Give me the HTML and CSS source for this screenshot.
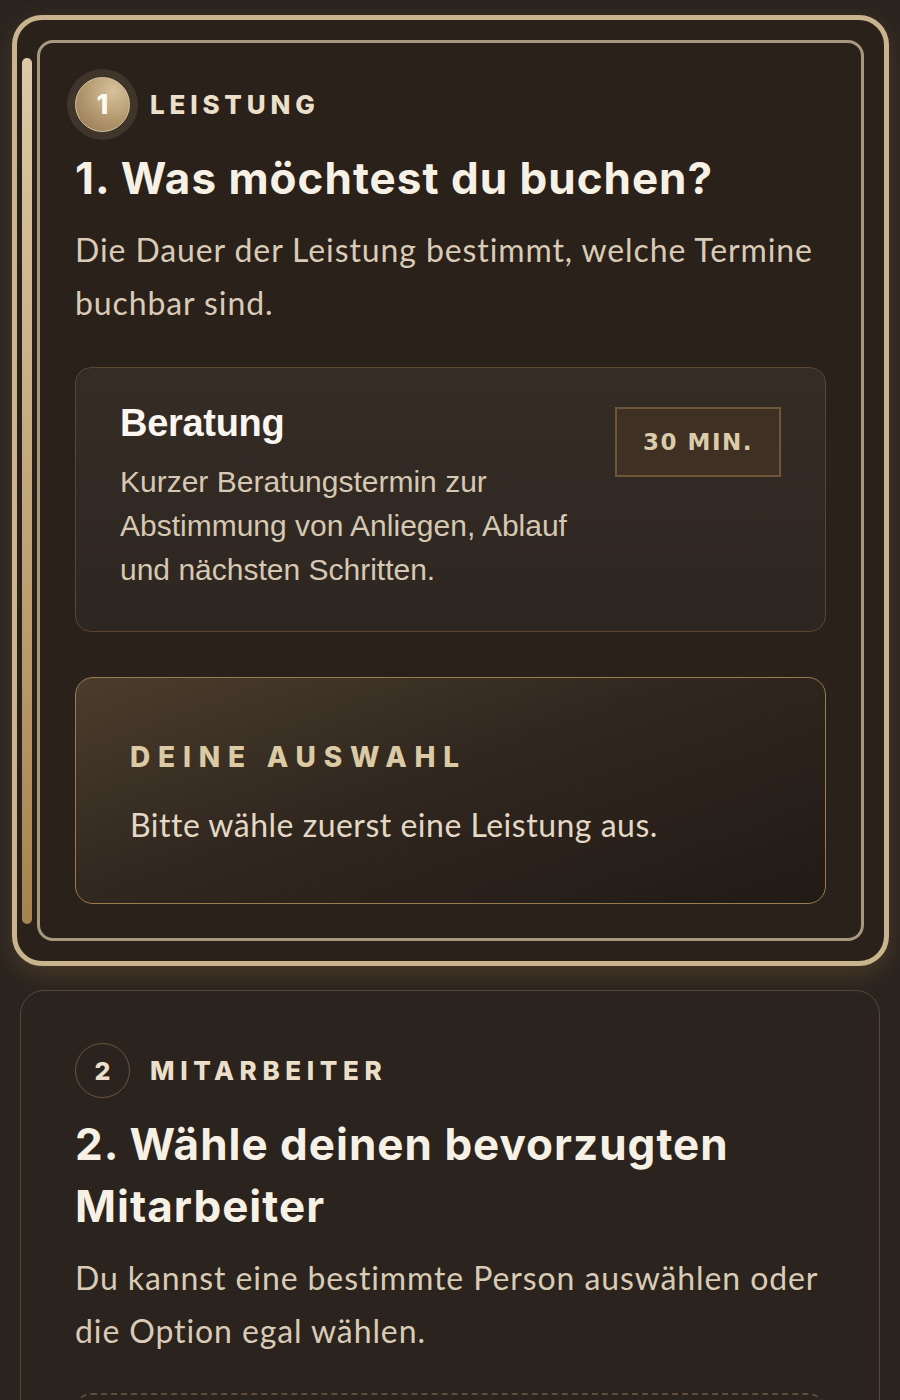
FILE: index.html
```html
<!DOCTYPE html>
<html lang="de">
<head>
    <title>Termin buchen</title>
    <meta charset="UTF-8">
    <link rel="stylesheet" href="styles.css">
</head>
<body>
    <main class="booking">
        <section class="step-frame">
            <span class="step-accent"></span>
            <div class="step step-active">
                <div class="step-head">
                    <span class="step-num step-num-active">1</span>
                    <span class="step-label">Leistung</span>
                </div>
                <h2 class="step-title">1. Was möchtest du buchen?</h2>
                <p class="step-text">Die Dauer der Leistung bestimmt, welche Termine buchbar sind.</p>

                <div class="service">
                    <div class="service-info">
                        <h3 class="service-name">Beratung</h3>
                        <p class="service-desc">Kurzer Beratungstermin zur Abstimmung von Anliegen, Ablauf und nächsten Schritten.</p>
                    </div>
                    <span class="service-time">30 Min.</span>
                </div>

                <div class="summary">
                    <div class="summary-label">Deine Auswahl</div>
                    <p class="summary-text">Bitte wähle zuerst eine Leistung aus.</p>
                </div>
            </div>
        </section>

        <section class="step step-next">
            <div class="step-head">
                <span class="step-num">2</span>
                <span class="step-label">Mitarbeiter</span>
            </div>
            <h2 class="step-title">2. Wähle deinen bevorzugten Mitarbeiter</h2>
            <p class="step-text">Du kannst eine bestimmte Person auswählen oder die Option egal wählen.</p>
            <div class="staff-list"></div>
        </section>
    </main>
</body>
</html>
```

FILE: styles.css
```css
body {
    margin: 0;
    background-color: #2a241f;
    font-family: 'Lato', sans-serif;
    color: #d9cbb5;
}

.booking {
    padding: 15px 11px 0 12px;
}

/* aktiver Schritt mit Rahmen */
.step-frame {
    position: relative;
    border: 5px solid #c9b48e;
    border-radius: 30px;
    padding: 20px;
    background: #2a211b;
    box-shadow: 0 8px 24px rgba(110, 85, 50, 0.45);
}

.step-accent {
    position: absolute;
    left: 5px;
    top: 38px;
    bottom: 37px;
    width: 10px;
    border-radius: 5px;
    background: linear-gradient(180deg, #dcc9a6, #b8996a 70%, #a5834e);
}

.step {
    background: #2b231e;
    border: 1.5px solid #56473a;
    border-radius: 24px;
    padding: 52px 54px 0 54px;
}

.step-active {
    background: #2a211b;
    border: 3px solid #a8987e;
    border-radius: 16px;
    padding: 34px 35px 34px 35px;
}

.step-next {
    margin: 24px 9px 0 8px;
    height: 420px;
}

.step-head {
    display: flex;
    align-items: center;
    gap: 20px;
}

.step-num {
    width: 53px;
    height: 53px;
    border-radius: 50%;
    border: 1.5px solid #6a563f;
    display: flex;
    align-items: center;
    justify-content: center;
    font-family: 'Inter', sans-serif;
    font-weight: 800;
    font-size: 25px;
    color: #eadfcd;
}

.step-num-active {
    border: 1.5px solid #d8c6a2;
    background: radial-gradient(circle at 70% 25%, #d6c29c, #b49a70 50%, #937550);
    box-shadow: 0 0 0 8px #3f352a;
    font-size: 27px;
    color: #fffaf0;
}

.step-label {
    font-family: 'Inter', sans-serif;
    font-weight: 800;
    font-size: 26px;
    letter-spacing: 4.8px;
    text-transform: uppercase;
    color: #ecdfca;
}

.step-next .step-label {
    letter-spacing: 5.6px;
}

.step-title {
    font-family: 'Inter', sans-serif;
    font-weight: 700;
    font-size: 44px;
    line-height: 62px;
    letter-spacing: 1px;
    color: #f7f0e4;
    margin: 15px 0 0 0;
}

.step-text {
    font-size: 32px;
    line-height: 53px;
    letter-spacing: 0.9px;
    color: #d9cbb5;
    margin: 14px 0 0 0;
}

/* Leistungskarte */
.service {
    display: flex;
    align-items: flex-start;
    gap: 32px;
    margin-top: 38px;
    padding: 33px 44px 39px 44px;
    border: 1px solid #5b4632;
    border-radius: 16px;
    background: linear-gradient(180deg, #352c26, #2e2620);
}

.service-info {
    flex: 1;
}

.service-name {
    font-family: 'Liberation Sans', Arial, sans-serif;
    font-weight: 700;
    font-size: 38px;
    line-height: 44px;
    letter-spacing: -0.3px;
    color: #fbf7f0;
    margin: 0;
}

.service-desc {
    font-family: 'Liberation Sans', Arial, sans-serif;
    font-size: 30px;
    line-height: 44px;
    color: #d6c8b2;
    margin: 15px 0 0 0;
}

.service-time {
    margin-top: 6px;
    padding: 0 26px;
    height: 66px;
    display: flex;
    align-items: center;
    border: 2px solid #6e5638;
    background: #3e3022;
    font-family: 'DejaVu Sans', sans-serif;
    font-weight: 700;
    font-size: 23px;
    letter-spacing: 1.5px;
    text-transform: uppercase;
    color: #dccbaa;
}

/* Auswahl */
.summary {
    margin-top: 45px;
    padding: 62px 54px 52px 54px;
    border: 1.5px solid #9a7c4e;
    border-radius: 18px;
    background: linear-gradient(160deg, #4b3d2c 0%, #30271f 45%, #211a15 100%);
}

.summary-label {
    font-family: 'Inter', sans-serif;
    font-weight: 800;
    font-size: 28px;
    line-height: 34px;
    letter-spacing: 7.8px;
    text-transform: uppercase;
    color: #dccaa5;
}

.summary-text {
    font-size: 32px;
    line-height: 52px;
    letter-spacing: 0.5px;
    color: #e4d8c4;
    margin: 25px 0 0 0;
}

.staff-list {
    margin-top: 36px;
    height: 120px;
    border: 2px dashed #5d4d3d;
    border-radius: 16px;
}
```
